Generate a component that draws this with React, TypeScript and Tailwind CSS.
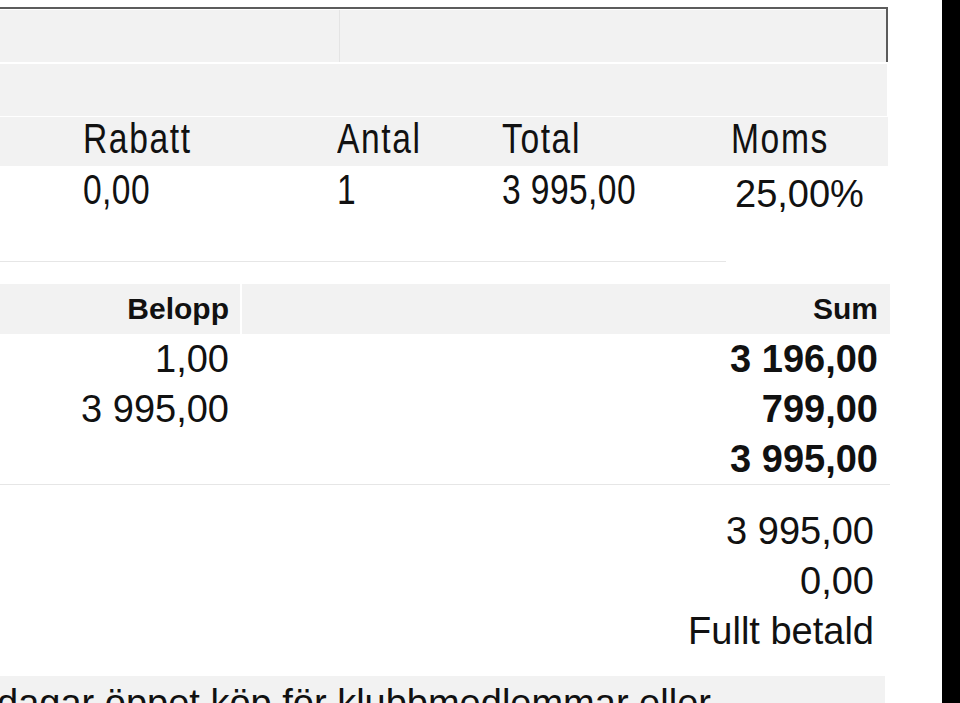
const cond = 'inline-block origin-left scale-x-[0.8] whitespace-nowrap';

const summaryRows = [
  { amount: '1,00', sum: '3 196,00' },
  { amount: '3 995,00', sum: '799,00' },
  { amount: '', sum: '3 995,00' },
];

const payments = ['3 995,00', '0,00', 'Fullt betald'];

export default function App() {
  return (
    <div className="flex h-[703px] w-[960px] overflow-hidden bg-black font-['Liberation_Sans',Arial,sans-serif] text-[#111]">
      <div className="w-[942px] shrink-0 overflow-hidden bg-white">
        <div className="h-[7px]" />

        {/* top boxes */}
        <div className="w-[888px] border-t-2 border-r-2 border-[#5c5c5c] pt-[1px]">
          <div className="flex h-[52px]">
            <div className="w-[339px] bg-[#f2f2f2]" />
            <div className="w-[1px] bg-[#e4e4e4]" />
            <div className="flex-1 bg-[#f2f2f2]" />
          </div>
        </div>
        <div className="mt-[2px] h-[52px] w-[887px] bg-[#f2f2f2]" />

        {/* line items */}
        <div className="mt-[1px] flex h-[49px] w-[888px] bg-[#f2f2f2] pt-[2px] pl-[83px] text-[42px] leading-[40px] tracking-[2px]">
          <div className="w-[254px] shrink-0">
            <span className={cond}>Rabatt</span>
          </div>
          <div className="w-[165px] shrink-0">
            <span className={cond}>Antal</span>
          </div>
          <div className="w-[229px] shrink-0">
            <span className={cond}>Total</span>
          </div>
          <div className="shrink-0">
            <span className={cond}>Moms</span>
          </div>
        </div>
        <div className="flex h-[96px] w-[726px] border-b border-[#e6e6e6] pl-[83px]">
          <div className="w-[254px] shrink-0 pt-[4px] text-[42px] leading-[40px] tracking-[0.5px]">
            <span className={cond}>0,00</span>
          </div>
          <div className="w-[165px] shrink-0 pt-[4px] text-[42px] leading-[40px] tracking-[0.5px]">
            <span className={cond}>1</span>
          </div>
          <div className="w-[233px] shrink-0 pt-[4px] text-[42px] leading-[40px] tracking-[0.5px]">
            <span className={cond}>3 995,00</span>
          </div>
          <div className="shrink-0 pt-[8px] text-[38px] leading-[40px] whitespace-nowrap">25,00%</div>
        </div>

        {/* summary */}
        <div className="mt-[22px] w-[890px] border-b border-[#e6e6e6]">
          <div className="flex h-[50px] text-[30px] leading-[50px] font-bold">
            <div className="w-[240px] bg-[#f2f2f2] pr-[11px] text-right">Belopp</div>
            <div className="ml-[2px] flex-1 bg-[#f2f2f2] pr-[12px] text-right">Sum</div>
          </div>
          {summaryRows.map((r, i) => (
            <div key={i} className="flex h-[50px] text-[38px] leading-[50px]">
              <div className="w-[240px] pr-[11px] text-right">{r.amount}</div>
              <div className="ml-[2px] flex-1 pr-[12px] text-right font-bold">{r.sum}</div>
            </div>
          ))}
        </div>

        {/* payment */}
        <div className="mt-[21px] w-[890px] pr-[16px] text-right text-[38px] leading-[50px]">
          {payments.map((p) => (
            <div key={p}>{p}</div>
          ))}
        </div>

        <div className="mt-[20px] w-[885px] bg-[#f2f2f2] pt-[2px] text-[38px] leading-[50px] whitespace-nowrap">
          <span className="-ml-[3px] inline-block">dagar öppet köp för klubbmedlemmar eller</span>
        </div>
      </div>
      <div className="flex-1" />
    </div>
  );
}
